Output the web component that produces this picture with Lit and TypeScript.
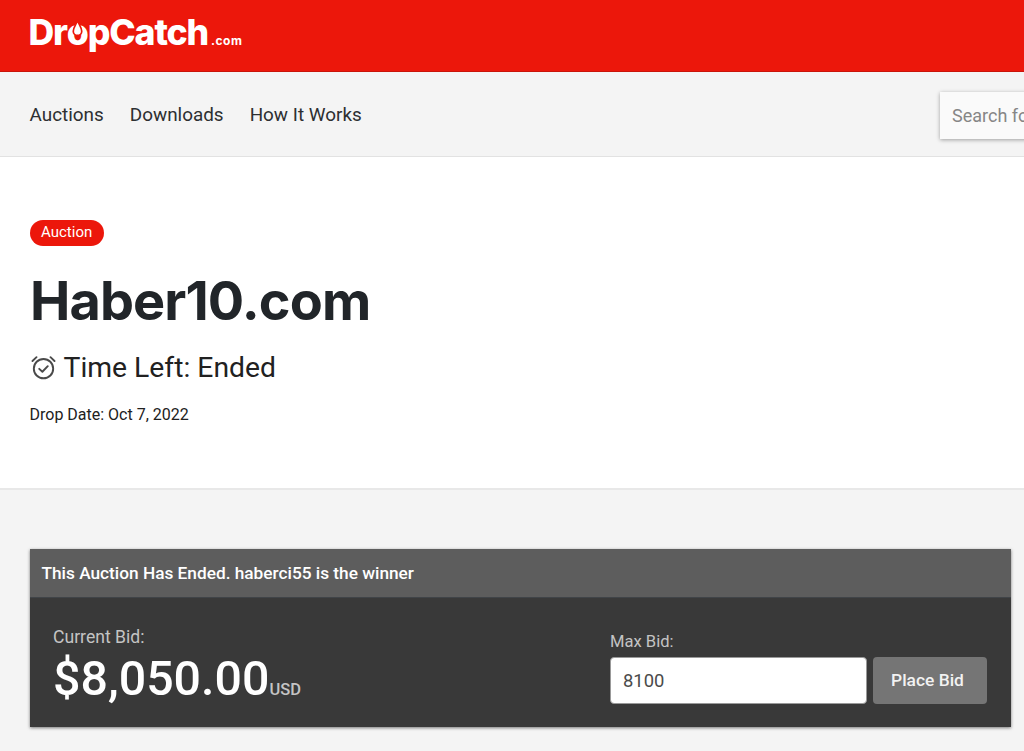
import { LitElement, html, css } from "lit";
import { customElement } from "lit/decorators.js";

@customElement("app-root")
export class AppRoot extends LitElement {
  static styles = css`
    :host { display: block; height: 751px; overflow: hidden; background: #f4f4f4; font-family: Roboto, sans-serif; color: #212529; }
    .top { height: 71px; background: #ec170b; border-bottom: 1px solid #c9140a; padding-left: 28.5px; display: flex; align-items: flex-start; }
    .logo { display: flex; align-items: baseline; color: #fff; margin-top: 10px; font-family: Inter, sans-serif; font-weight: 800; }
    .logo-main { font-size: 35.6px; letter-spacing: -1.15px; line-height: 46px; }
    .o { position: relative; display: inline-block; }
    .drop { position: absolute; left: 50%; top: 9px; width: 11px; height: 18px; margin-left: -5.5px; }
    .logo-tld { font-size: 12px; font-weight: 700; margin-left: 3px; letter-spacing: 0.5px; }
    nav { height: 84px; background: #f4f4f4; border-bottom: 1px solid #e2e2e2; padding-left: 30px; display: grid; grid-template-columns: 910px 300px; align-items: center; }
    .links { display: flex; gap: 26px; font-size: 18.9px; color: #2d2f31; margin-left: -0.5px; margin-top: 1px; }
    .search { height: 47px; background: #fafafa; box-shadow: 0 1px 4px rgba(0,0,0,.35); display: flex; align-items: center; padding-left: 12px; font-size: 18px; color: #868686; margin-top: 2px; }
    .hero { height: 333px; background: #fff; border-bottom: 2px solid #e8e8e8; padding: 63px 30px 0; box-sizing: border-box; }
    .badge { display: inline-block; height: 26px; line-height: 25px; padding: 0 11.5px; border-radius: 13px; background: #ec170b; color: #fff; font-size: 15px; margin-left: -0.5px; }
    h1 { margin: 17px 0 0; font-size: 54px; line-height: 76px; font-weight: 700; letter-spacing: -0.9px; color: #212529; font-family: Inter, sans-serif; }
    .time { display: flex; align-items: center; gap: 7px; font-size: 28.3px; line-height: 40px; margin-top: 9px; color: #212121; }
    .time svg { width: 27px; height: 27px; margin-top: -2px; margin-left: -0.5px; }
    .drop-date { font-size: 16px; line-height: 22px; margin-top: 16px; color: #212121; margin-left: -0.5px; }
    .card { margin: 59px 13px 0 29.5px; background: #393939; box-shadow: 0 1px 3px rgba(0,0,0,.5); }
    .card-head { height: 49px; background: #5d5d5d; display: flex; align-items: center; padding-left: 12px; color: #fff; font-size: 17.25px; font-weight: 500; border-bottom: 1px solid #404448; box-sizing: border-box; }
    .card-body { height: 129px; display: flex; justify-content: space-between; padding: 0 24px 0 23.5px; box-sizing: border-box; }
    .cur-label { font-size: 17.6px; color: #c4c4c4; margin-top: 29px; line-height: 20px; }
    .amount { display: flex; align-items: baseline; color: #fff; font-size: 48.3px; font-weight: 500; line-height: 60px; margin-top: 2px; }
    .usd { font-size: 16.5px; color: #c4c4c4; }
    .max-label { font-size: 16.6px; color: #c4c4c4; line-height: 20px; margin-top: 34px; }
    .row { display: flex; gap: 6px; margin-top: 5px; }
    .input { width: 257px; height: 47px; background: #fff; border: 1px solid #999; border-radius: 4px; box-sizing: border-box; display: flex; align-items: center; padding-left: 12px; font-size: 18.4px; color: #4b4b4b; }
    .btn { width: 114px; height: 47px; box-sizing: border-box; padding: 0 5px 1px 0; background: #757575; border-radius: 4px; color: #f2f2f2; font-size: 17.4px; font-weight: 500; display: flex; align-items: center; justify-content: center; }
  `;

  render() {
    return html`
      <header class="top">
        <div class="logo">
          <span class="logo-main">Dr<span class="o">o<svg class="drop" viewBox="0 0 10 17"><path d="M5 1C6 5 9 8 9 11.5a4 4 0 0 1-8 0C1 8 4 5 5 1Z" fill="#fff" stroke="#ec170b" stroke-width="1.6"/></svg></span>pCatch</span>
          <span class="logo-tld">.com</span>
        </div>
      </header>
      <nav>
        <div class="links"><span>Auctions</span><span>Downloads</span><span>How It Works</span></div>
        <div class="search">Search for domains</div>
      </nav>
      <section class="hero">
        <span class="badge">Auction</span>
        <h1>Haber10.com</h1>
        <div class="time">
          <svg viewBox="0 0 24 24" fill="none" stroke="#4a4a4a" stroke-width="1.7" stroke-linecap="round" stroke-linejoin="round">
            <circle cx="12" cy="13" r="8.6"/><path d="M8.2 13.2l2.8 2.6 4.8-5"/><path d="M2.2 6.2 5.8 2.8M21.8 6.2 18.2 2.8"/>
          </svg>
          <span>Time Left: Ended</span>
        </div>
        <div class="drop-date">Drop Date: Oct 7, 2022</div>
      </section>
      <section class="card">
        <div class="card-head">This Auction Has Ended. haberci55 is the winner</div>
        <div class="card-body">
          <div>
            <div class="cur-label">Current Bid:</div>
            <div class="amount">$8,050.00<span class="usd">USD</span></div>
          </div>
          <div>
            <div class="max-label">Max Bid:</div>
            <div class="row"><div class="input">8100</div><div class="btn">Place Bid</div></div>
          </div>
        </div>
      </section>
    `;
  }
}
